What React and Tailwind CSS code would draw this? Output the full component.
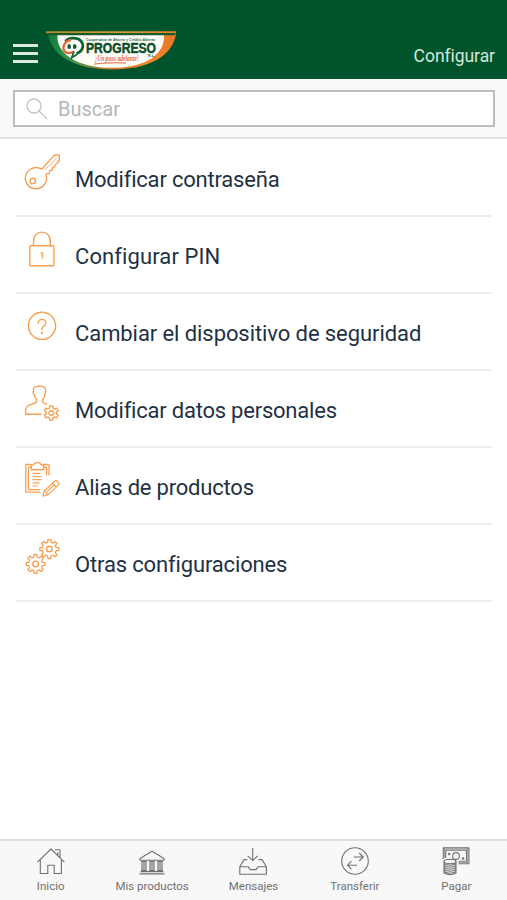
import React from "react";

function gearPath(cx, cy, outer, inner, teeth) {
  const points = [];
  const step = (Math.PI * 2) / teeth;
  for (let i = 0; i < teeth; i++) {
    const a = i * step - Math.PI / 2;
    [
      [-0.29, inner],
      [-0.2, outer],
      [0.2, outer],
      [0.29, inner],
    ].forEach(([t, r]) => {
      points.push(
        `${(cx + Math.cos(a + t * step) * r).toFixed(2)} ${(cy + Math.sin(a + t * step) * r).toFixed(2)}`
      );
    });
  }
  return `M${points.join("L")}Z`;
}

function RowIcon({ children }) {
  return (
    <svg
      className="h-10 w-10 shrink-0 text-[#f7a052]"
      viewBox="0 0 40 40"
      fill="none"
      stroke="currentColor"
      strokeWidth="1.4"
      strokeLinecap="round"
      strokeLinejoin="round"
    >
      {children}
    </svg>
  );
}

const KeyIcon = () => (
  <RowIcon>
    <path d="M19.6 18.2A10.6 10.6 0 1 0 24 23.8L24.4 22.6H27.3L27.6 19.6L30.2 19.2L30.4 16.8L32.4 16.4L33 14L36.2 11.2Q38 9 37.3 4.2Q33.500 3 31 5.6Z" />
    <path d="M23.5 18.4L34.3 7.4" strokeWidth="0.9" />
    <circle cx="10.8" cy="29.9" r="2.7" />
  </RowIcon>
);

const LockIcon = () => (
  <RowIcon>
    <rect x="7.8" y="17.7" width="24.2" height="20" rx="1" />
    <path d="M11.5 17.5V12.5A8.4 8.4 0 0 1 28.3 12.5V17.5" />
    <path d="M19.2 25H20.4V30" />
  </RowIcon>
);

const HelpIcon = () => (
  <RowIcon>
    <circle cx="20" cy="20.8" r="13.6" />
    <path d="M16.2 18.3Q16.3 14.4 20.1 14.4Q23.8 14.6 23.8 17.8Q23.8 19.8 21.8 21.2Q20 22.2 20 24.4" />
    <path d="M20 27.6V28.2" strokeWidth="2" />
  </RowIcon>
);

const PersonIcon = () => (
  <RowIcon>
    <path d="M19 32.2H3.6V28.5Q3.8 24.5 7.5 23.2L13 21Q15 20 14.6 17.3Q12.3 15.3 12.1 12.2Q10.5 11 11.5 9Q10.8 4.5 16.5 4.2Q23.4 3.7 23.7 8.2L23.2 11.8Q22.9 15.6 20.7 17.4Q20.2 20.6 22.5 21.4L24.2 22" />
    <path d={gearPath(29.3, 31, 7.3, 5.3, 6)} />
    <circle cx="29.3" cy="31" r="2.3" />
  </RowIcon>
);

const ClipboardIcon = () => (
  <RowIcon>
    <path d="M9.3 5.5H3.8V33.2H18M9.5 8.2H6.4V30.6H18M21.5 5.5H27V15.7M21.3 8.2H24.6V15.7" strokeWidth="1.3" />
    <path d="M9.3 10.8V6.6L12 5.7Q12.4 3.6 15.5 3.6Q18.4 3.6 19 5.7L21.6 6.6V10.8Z" />
    <path d="M11 14.3H18M11 17.5H19.6M11 20.7H19M11 23.9H16.8M11 27H15" strokeWidth="1.2" />
    <path d="M21 37.2L22.3 31.7L32.8 22.2Q34 21 35.6 22.6L36.7 23.8Q37.6 25 36.4 26.1L26 35.6ZM22.3 31.7L26 35.6M30.7 24.2L34.2 28M25.2 32.4L32.3 26" strokeWidth="1.2" />
  </RowIcon>
);

const GearsIcon = () => (
  <RowIcon>
    <path d={gearPath(27.3, 13.1, 9.5, 7.1, 8)} strokeWidth="1.3" />
    <circle cx="27.3" cy="13.1" r="2.8" />
    <path d={gearPath(13.6, 27.9, 9.5, 7.1, 8)} strokeWidth="1.3" />
    <circle cx="13.6" cy="27.9" r="2.8" />
  </RowIcon>
);

function Logo() {
  return (
    <svg className="h-[42px] w-[132px]" viewBox="0 0 132 42">
      <defs>
        <linearGradient id="bowl" x1="0" x2="1">
          <stop offset="0" stopColor="#0f7a3a" />
          <stop offset="0.18" stopColor="#3f9a4c" />
          <stop offset="0.5" stopColor="#d9732c" />
          <stop offset="0.8" stopColor="#f08a2c" />
          <stop offset="1" stopColor="#e8742a" />
        </linearGradient>
        <linearGradient id="rim" x1="0" x2="1">
          <stop offset="0" stopColor="#b08a2c" />
          <stop offset="0.6" stopColor="#d69a30" />
          <stop offset="1" stopColor="#e0852c" />
        </linearGradient>
      </defs>
      <path d="M2 5H130C127 26 104 40.500 66 40.500C28 40.500 5 26 2 5Z" fill="url(#bowl)" />
      <path d="M11.500 6H118C119 24 102 38.800 66 38.800C30 38.800 10 24 11.500 6Z" fill="#fdfdf8" />
      <path d="M0 2.200H130V4.300H0Z" fill="url(#rim)" />
      <path d="M1 4.300H129V6.200H1Z" fill="#17592b" />
      <path d="M30.500 24.500C37 22.500 38.500 16 35 12C31 7.800 22 8.500 19.500 12.500" fill="none" stroke="#0b6633" strokeWidth="2.700" />
      <path d="M25 11C17.500 12 15.500 20 19.500 23Q23 25.500 28 22.500" fill="none" stroke="#e5683a" strokeWidth="2.400" />
      <path d="M28 22.500L25.500 29L31.500 25" fill="none" stroke="#0b6633" strokeWidth="1.600" />
      <ellipse cx="23.200" cy="17.500" rx="1.800" ry="2.500" fill="#16572f" />
      <ellipse cx="28.700" cy="17.500" rx="1.800" ry="2.500" fill="#16572f" />
      <text x="40" y="12.200" textLength="69" lengthAdjust="spacingAndGlyphs" className="fill-[#2b6a45] font-['Liberation_Sans',sans-serif] text-[4.200px] font-bold">
        Cooperativa de Ahorro y Crédito Abierta
      </text>
      <text x="40" y="24.300" textLength="70" lengthAdjust="spacingAndGlyphs" stroke="#0c4d2a" strokeWidth="0.500" className="fill-[#0c4d2a] font-['Liberation_Sans',sans-serif] text-[14px] font-bold">
        PROGRESO
      </text>
      <text x="102" y="28.400" className="fill-[#2b6a45] font-['Liberation_Sans',sans-serif] text-[3.800px] font-bold">
        R.L.
      </text>
      <text x="49" y="31.800" textLength="44" lengthAdjust="spacingAndGlyphs" className="fill-[#e9683c] font-['Liberation_Serif',serif] text-[7.500px] font-bold italic">
        ¡Un paso adelante!
      </text>
      <path d="M48 35.200Q60 33.300 80 34" fill="none" stroke="#e9683c" strokeWidth="1" />
    </svg>
  );
}

const rows = [
  { label: "Modificar contraseña", Icon: KeyIcon, track: "tracking-[-0.2px]" },
  { label: "Configurar PIN", Icon: LockIcon, track: "tracking-[0.1px]" },
  { label: "Cambiar el dispositivo de seguridad", Icon: HelpIcon, track: "tracking-[-0.08px]" },
  { label: "Modificar datos personales", Icon: PersonIcon, track: "tracking-[-0.22px]" },
  { label: "Alias de productos", Icon: ClipboardIcon, track: "tracking-[-0.2px]" },
  { label: "Otras configuraciones", Icon: GearsIcon, track: "tracking-[-0.15px]" },
];

function TabIcon({ children }) {
  return (
    <svg className="h-8 w-8" viewBox="0 0 32 32" fill="none" stroke="#707070" strokeWidth="1.1" strokeLinejoin="round">
      {children}
    </svg>
  );
}

const HomeIcon = () => (
  <TabIcon>
    <path d="M2.500 17.200L16 4L29.300 17.200M5.300 15V28.500H12.800V20.300H19.200V28.500H26.400V15M20 4.800H25V12.500M22.800 7V10" />
  </TabIcon>
);

const BankIcon = () => (
  <TabIcon>
    <path d="M16 6.300L4 13.500V15.200H28V13.500ZM3.500 28.900H28.500M4.500 26.600H27.500" />
    <path d="M6 16V26M8 16V26M10 16V26M14 16V26M16 16V26M18 16V26M22 16V26M24 16V26M26 16V26" strokeWidth="1.200" />
    <path d="M5.500 16.500H10.500M13.500 16.500H18.500M21.500 16.500H26.500M5.500 25.500H10.500M13.500 25.500H18.500M21.500 25.500H26.500" />
  </TabIcon>
);

const InboxIcon = () => (
  <TabIcon>
    <path d="M15.700 3V15.300M10.700 10.800L15.700 15.600L20.700 10.800M10.300 14.600H7L2.800 21.700V29.300H29.400V21.700L25 14.600H21.500M2.800 21.700H11L13.300 24.600H19L21.300 21.700H29.400" />
  </TabIcon>
);

const TransferIcon = () => (
  <TabIcon>
    <circle cx="16" cy="16" r="13.300" />
    <path d="M14.700 12H24M20.200 8L24.200 12L20.200 16M18 20.200H8.700M12.500 16.200L8.500 20.200L12.500 24.200" />
  </TabIcon>
);

const PayIcon = () => (
  <TabIcon>
    <path d="M3.300 14V2.900H28.900V18.700H18.500M5.700 12.700V5.300H26.600V16.300H18.500" />
    <path d="M3.300 4.100H28.900M27.700 3V18.500M4.500 3V13M18.500 17.500H28" strokeWidth="0.600" />
    <circle cx="16" cy="11" r="3.400" />
    <path d="M8 9H10.500M9.250 7.800V10.200M21.800 13.500H24.300M23 12.300V14.700" strokeWidth="1.400" />
    <ellipse cx="10" cy="16.500" rx="6" ry="2.200" fill="#f8f8f8" />
    <path d="M4 16.500V28Q10 31.500 16 28V16.500M4 18.500Q10 22 16 18.500M4 20.500Q10 24 16 20.500M4 22.500Q10 26 16 22.500M4 24.500Q10 28 16 24.500M4 26.500Q10 30 16 26.500" />
  </TabIcon>
);

const tabs = [
  { label: "Inicio", Icon: HomeIcon },
  { label: "Mis productos", Icon: BankIcon },
  { label: "Mensajes", Icon: InboxIcon },
  { label: "Transferir", Icon: TransferIcon },
  { label: "Pagar", Icon: PayIcon },
];

export default function App() {
  return (
    <div className="flex h-[900px] w-[507px] flex-col overflow-hidden bg-white font-[Roboto,sans-serif] text-[#1f3144]">
      <header className="flex h-[79px] shrink-0 items-end bg-[#00542b] pl-[13px] pr-3">
        <button aria-label="Menú" className="mb-[16px] flex w-[25px] flex-col gap-[5px]">
          <span className="h-[3px] bg-[#dcebe2]" />
          <span className="h-[3px] bg-[#dcebe2]" />
          <span className="h-[3px] bg-[#dcebe2]" />
        </button>
        <div className="mb-2 ml-2">
          <Logo />
        </div>
        <span className="mb-[12px] ml-auto text-[17.5px] leading-[22px] tracking-[-0.05px] text-[#d5e6dc]">Configurar</span>
      </header>

      <div className="h-[60px] shrink-0 border-b-2 border-[#e3e3e3] bg-[#f9f9f9] px-[13px] pt-[11px]">
        <div className="flex h-[37px] w-[482px] items-center border-2 border-[#bcbebe] bg-white pl-[11px]">
          <svg className="h-[22px] w-[22px]" viewBox="0 0 22 22" fill="none" stroke="#c3c3c3" strokeWidth="1.3">
            <circle cx="8" cy="8" r="7" />
            <path d="M13 13L21 21" />
          </svg>
          <span className="ml-[10px] pt-px text-[20px] leading-none text-[#b3b6b8]">Buscar</span>
        </div>
      </div>

      <main className="flex-1 px-4 pt-[1px]">
        {rows.map(({ label, Icon, track }) => (
          <div key={label} className="flex h-[77px] w-[476px] items-start border-b-2 border-[#ededed] pl-[6px] pt-[11px]">
            <Icon />
            <span className={`ml-[13px] mt-4 whitespace-nowrap text-[22px] leading-[26px] ${track}`}>{label}</span>
          </div>
        ))}
      </main>

      <nav className="grid h-[61px] shrink-0 grid-cols-5 border-t-2 border-[#dedede] bg-[#f8f8f8]">
        {tabs.map(({ label, Icon }) => (
          <div key={label} className="flex flex-col items-center pt-1">
            <Icon />
            <span className="mt-[2px] whitespace-nowrap text-[11.5px] leading-[14px] text-[#707070]">{label}</span>
          </div>
        ))}
      </nav>
    </div>
  );
}
